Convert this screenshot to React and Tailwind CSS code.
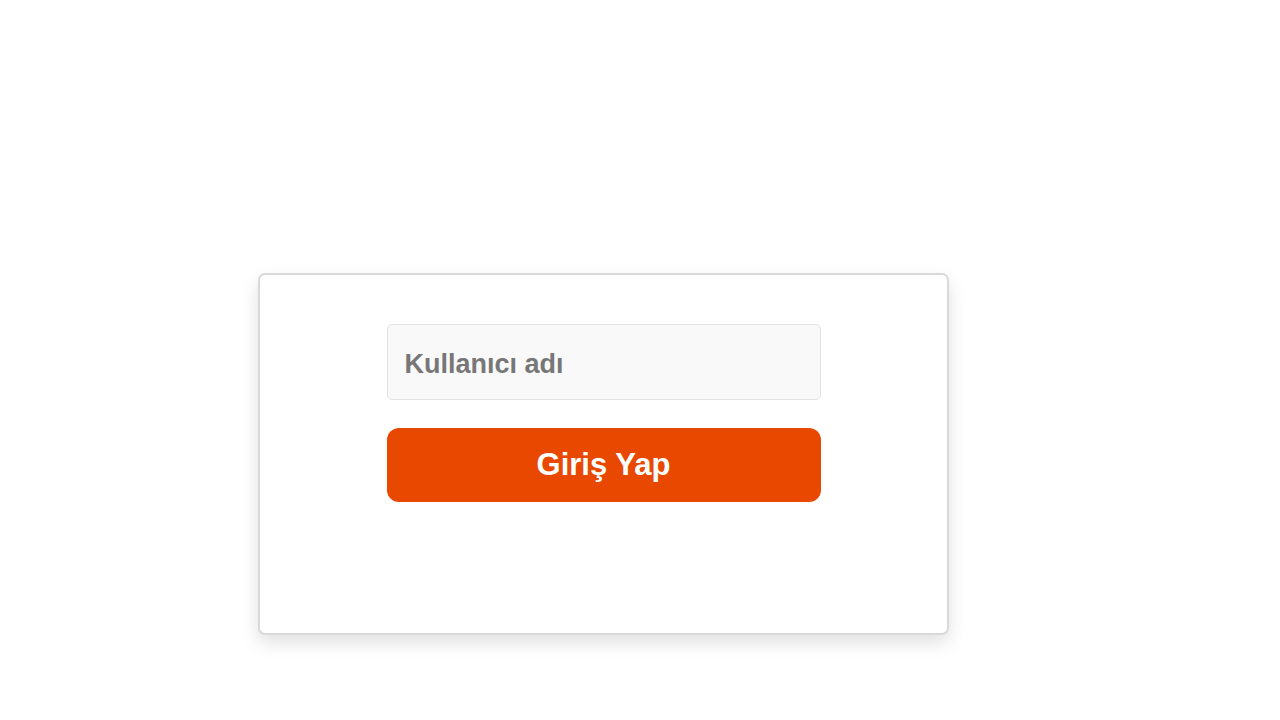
import React from "react";

const App = () => {
  return (
    <div className="min-h-screen bg-white pt-[273px] pl-[258px]" style={{ fontFamily: '"Liberation Sans", Arial, sans-serif' }}>
      <div className="w-[691px] h-[362px] border-2 border-[#d9d9d9] rounded-[7px] bg-white shadow-[0_8px_18px_rgba(0,0,0,0.12)] flex flex-col items-center pt-[49px]">
        <input
          type="text"
          placeholder="Kullanıcı adı"
          className="w-[434px] h-[76px] bg-[#f9f9f9] border border-[#e3e3e3] rounded-[5px] px-[17px] pt-[5px] text-[27px] font-bold text-[#333] placeholder:text-[#777] outline-none"
        />
        <button className="mt-[28px] w-[434px] h-[74px] bg-[#e84800] rounded-[12px] text-white text-[31px] font-bold">
          Giriş Yap
        </button>
      </div>
    </div>
  );
};

export default App;
